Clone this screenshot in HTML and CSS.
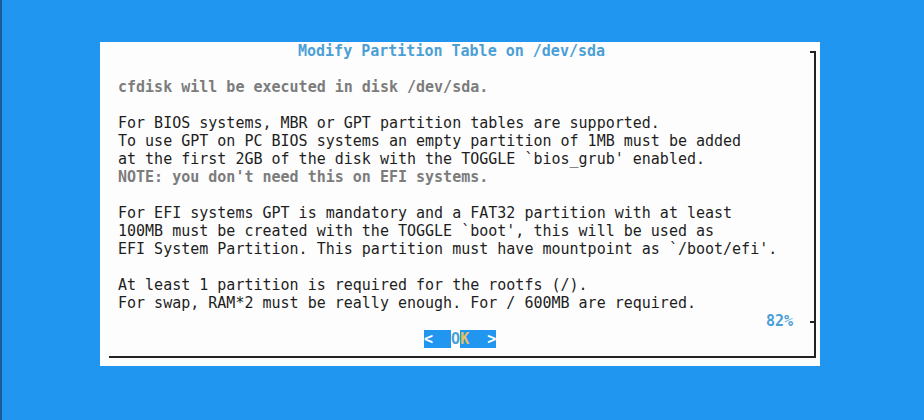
FILE: index.html
```html
<!DOCTYPE html>
<html>
<head>
<meta charset="utf-8">
<link rel="stylesheet" href="styles.css">
</head>
<body>
<div class="screen">
  <div class="dialog">
    <div class="frame"><span class="tick tick-top"></span><span class="tick tick-pct"></span></div>
    <div class="title">Modify Partition Table on /dev/sda</div>
    <div class="body">
      <div class="line"> </div>
      <div class="line dim">cfdisk will be executed in disk /dev/sda.</div>
      <div class="line"> </div>
      <div class="line">For BIOS systems, MBR or GPT partition tables are supported.</div>
      <div class="line">To use GPT on PC BIOS systems an empty partition of 1MB must be added</div>
      <div class="line">at the first 2GB of the disk with the TOGGLE `bios_grub' enabled.</div>
      <div class="line dim">NOTE: you don't need this on EFI systems.</div>
      <div class="line"> </div>
      <div class="line">For EFI systems GPT is mandatory and a FAT32 partition with at least</div>
      <div class="line">100MB must be created with the TOGGLE `boot', this will be used as</div>
      <div class="line">EFI System Partition. This partition must have mountpoint as `/boot/efi'.</div>
      <div class="line"> </div>
      <div class="line">At least 1 partition is required for the rootfs (/).</div>
      <div class="line">For swap, RAM*2 must be really enough. For / 600MB are required.</div>
    </div>
    <div class="pct-row"><span class="pct">82%</span></div>
    <div class="btn-row"><span class="btn"><span class="arrow">&lt;</span>  <span class="hot">O</span><span class="key">K</span>  <span class="arrow">&gt;</span></span></div>
  </div>
</div>
</body>
</html>
```
FILE: styles.css
```css
html, body {
  margin: 0;
  padding: 0;
}
body {
  width: 924px;
  height: 420px;
  background: #2196f0;
  overflow: hidden;
}
.screen {
  box-sizing: border-box;
  width: 924px;
  height: 420px;
  border-left: 2px solid #1b5b98;
  padding: 42px 0 0 98px;
}
.dialog {
  position: relative;
  width: 720px;
  height: 324px;
  background: #fdfdfd;
  font-family: "DejaVu Sans Mono", "Liberation Mono", monospace;
  font-size: 15px;
  line-height: 18px;
  color: #1e1e1e;
}
.frame {
  position: absolute;
  left: 9px;
  top: 9px;
  width: 705px;
  height: 305px;
  border-right: 2px solid #222;
  border-bottom: 2px solid #222;
}
.tick {
  position: absolute;
  right: 0;
  width: 4px;
  height: 2px;
  background: #222;
}
.tick-top { top: 0; }
.tick-pct { top: 270px; }
.title {
  padding-left: 198px;
  height: 18px;
  color: #4aa0d6;
  font-weight: bold;
  white-space: pre;
}
.body {
  padding-left: 18px;
}
.line {
  height: 18px;
  white-space: pre;
}
.dim {
  color: #7c7c7c;
  font-weight: bold;
}
.pct-row {
  height: 18px;
  padding-left: 666px;
}
.pct {
  color: #4aa0d6;
  font-weight: bold;
}
.btn-row {
  height: 18px;
  padding-left: 324px;
}
.btn {
  display: inline-block;
  height: 18px;
  background: #2196f0;
  color: #fff;
  font-weight: bold;
  white-space: pre;
}
.hot {
  background: #fdfdfd;
  color: #4aa0d6;
}
.key {
  color: #e6c35c;
}
```
